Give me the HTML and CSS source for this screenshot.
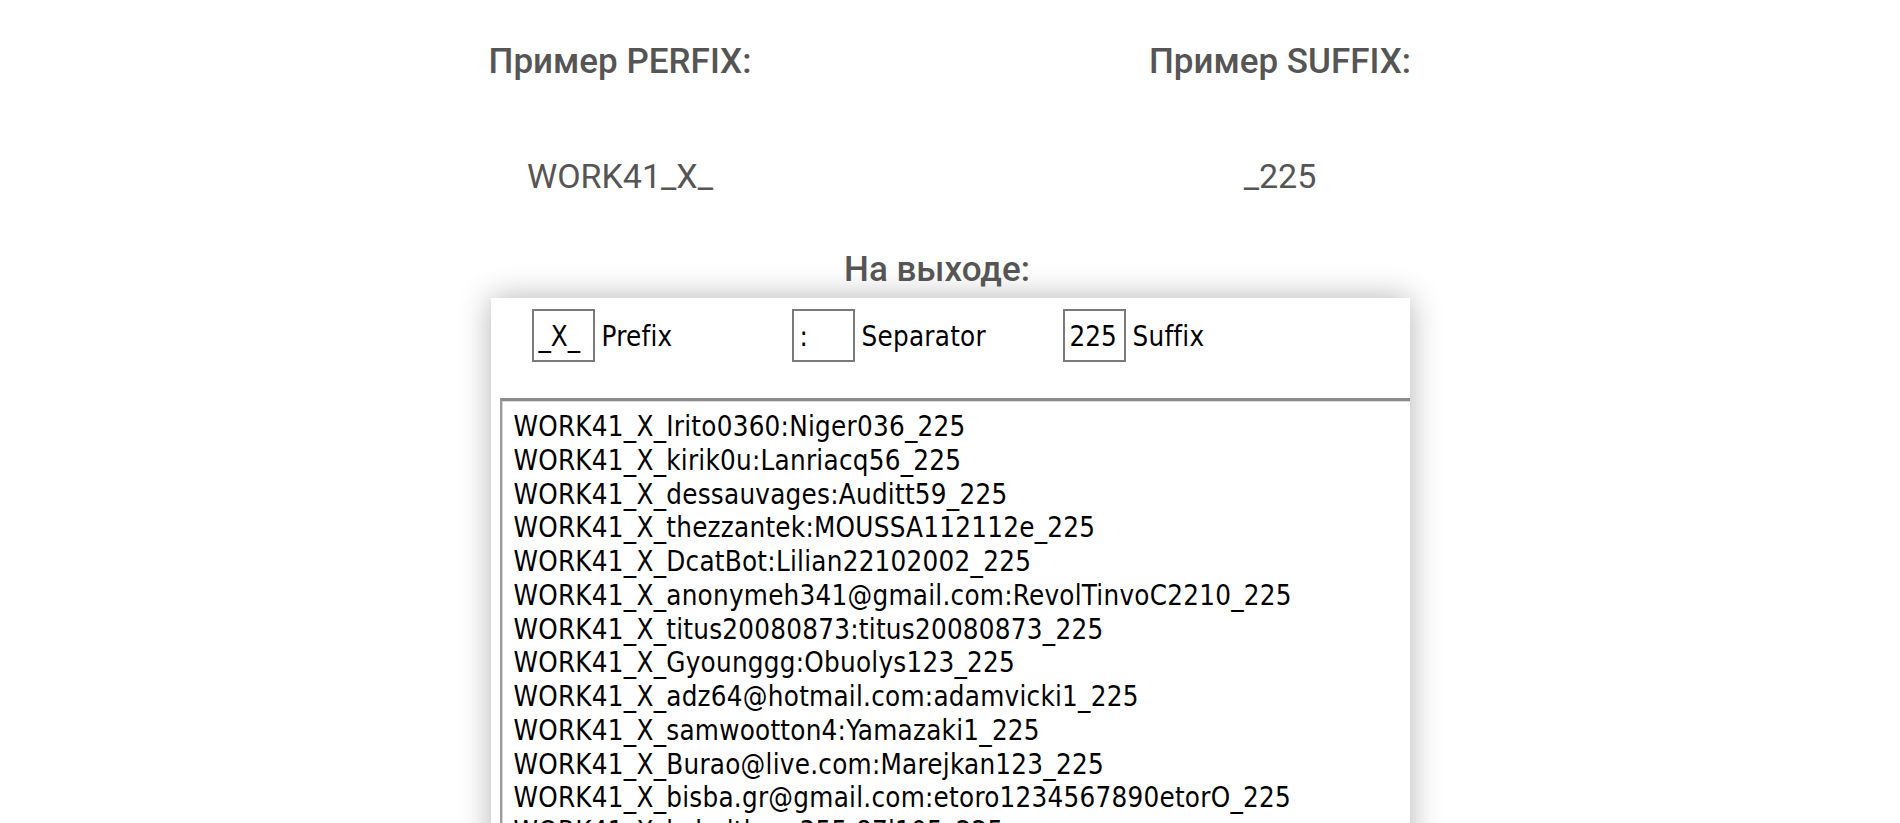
FILE: index.html
```html
<!DOCTYPE html>
<html lang="ru">
<head>
<meta charset="utf-8">
<title>Prefix / Suffix</title>
<link rel="stylesheet" href="styles.css">
</head>
<body>
<div class="examples">
  <div class="example">
    <div class="ex-title">Пример PERFIX:</div>
    <div class="ex-value">WORK41_X_</div>
  </div>
  <div class="example">
    <div class="ex-title">Пример SUFFIX:</div>
    <div class="ex-value">_225</div>
  </div>
</div>
<div class="out-title">На выходе:</div>
<div class="panel">
  <div class="controls">
    <div class="field f-prefix"><div class="box"><span>_X_</span></div><span class="label">Prefix</span></div>
    <div class="field f-sep"><div class="box"><span class="sep">:</span></div><span class="label">Separator</span></div>
    <div class="field f-suffix"><div class="box"><span>225</span></div><span class="label">Suffix</span></div>
  </div>
  <div class="list">
    <div class="line">WORK41_X_Irito0360:Niger036_225</div>
    <div class="line">WORK41_X_kirik0u:Lanriacq56_225</div>
    <div class="line">WORK41_X_dessauvages:Auditt59_225</div>
    <div class="line">WORK41_X_thezzantek:MOUSSA112112e_225</div>
    <div class="line">WORK41_X_DcatBot:Lilian22102002_225</div>
    <div class="line">WORK41_X_anonymeh341@gmail.com:RevolTinvoC2210_225</div>
    <div class="line">WORK41_X_titus20080873:titus20080873_225</div>
    <div class="line">WORK41_X_Gyounggg:Obuolys123_225</div>
    <div class="line">WORK41_X_adz64@hotmail.com:adamvicki1_225</div>
    <div class="line">WORK41_X_samwootton4:Yamazaki1_225</div>
    <div class="line">WORK41_X_Burao@live.com:Marejkan123_225</div>
    <div class="line">WORK41_X_bisba.gr@gmail.com:etoro1234567890etorO_225</div>
    <div class="line">WORK41_X_kobelthom355:87l105_225</div>
    <div class="line">WORK41_X_hellokitty:Kitty2020_225</div>
  </div>
</div>
</body>
</html>
```

FILE: styles.css
```css
html, body {
  margin: 0;
  padding: 0;
  background: #ffffff;
  overflow: hidden;
}

body {
  font-family: Roboto, "Noto Sans", sans-serif;
  color: #555555;
}

.examples {
  display: grid;
  grid-template-columns: 660px 660px;
  justify-content: center;
  padding-top: 42px;
}

.example {
  text-align: center;
}

.ex-title {
  font-size: 35px;
  line-height: 40px;
  font-weight: 500;
}

.ex-value {
  font-size: 34px;
  line-height: 40px;
  font-weight: 400;
  margin-top: 74px;
}

.out-title {
  text-align: center;
  font-size: 35px;
  line-height: 40px;
  font-weight: 500;
  margin-top: 54px;
  padding-right: 26px;
}

.panel {
  width: 919px;
  height: 600px;
  margin: 8px auto 0;
  background: #ffffff;
  box-shadow: 0 0 30px rgba(0, 0, 0, 0.3);
  overflow: hidden;
  font-family: "DejaVu Sans Condensed", "DejaVu Sans", sans-serif;
  color: #000000;
  font-size: 27.5px;
  letter-spacing: 0.25px;
}

.controls {
  display: flex;
  align-items: center;
  padding: 11px 0 0 41px;
  height: 53px;
}

.field {
  display: flex;
  align-items: center;
}

.f-prefix { width: 260px; }
.f-sep { width: 271px; }

.box {
  box-sizing: border-box;
  width: 63px;
  height: 53px;
  border: 2px solid #7a7a7a;
  display: flex;
  align-items: center;
  justify-content: flex-start;
  overflow: hidden;
  white-space: nowrap;
  padding: 0 0 0 5px;
  letter-spacing: 0;
}

.sep {
  padding-left: 1px;
}

.label {
  margin-left: 7px;
}

.list {
  margin: 36px 0 0 9px;
  border-top: 3px solid #8c8c8c;
  border-left: 2px solid #9a9a9a;
  box-shadow: inset 1px 1px 0 #d8d8d8;
  padding: 9px 0 0 12px;
  height: 600px;
}

.line {
  line-height: 33.75px;
  white-space: nowrap;
}
```
